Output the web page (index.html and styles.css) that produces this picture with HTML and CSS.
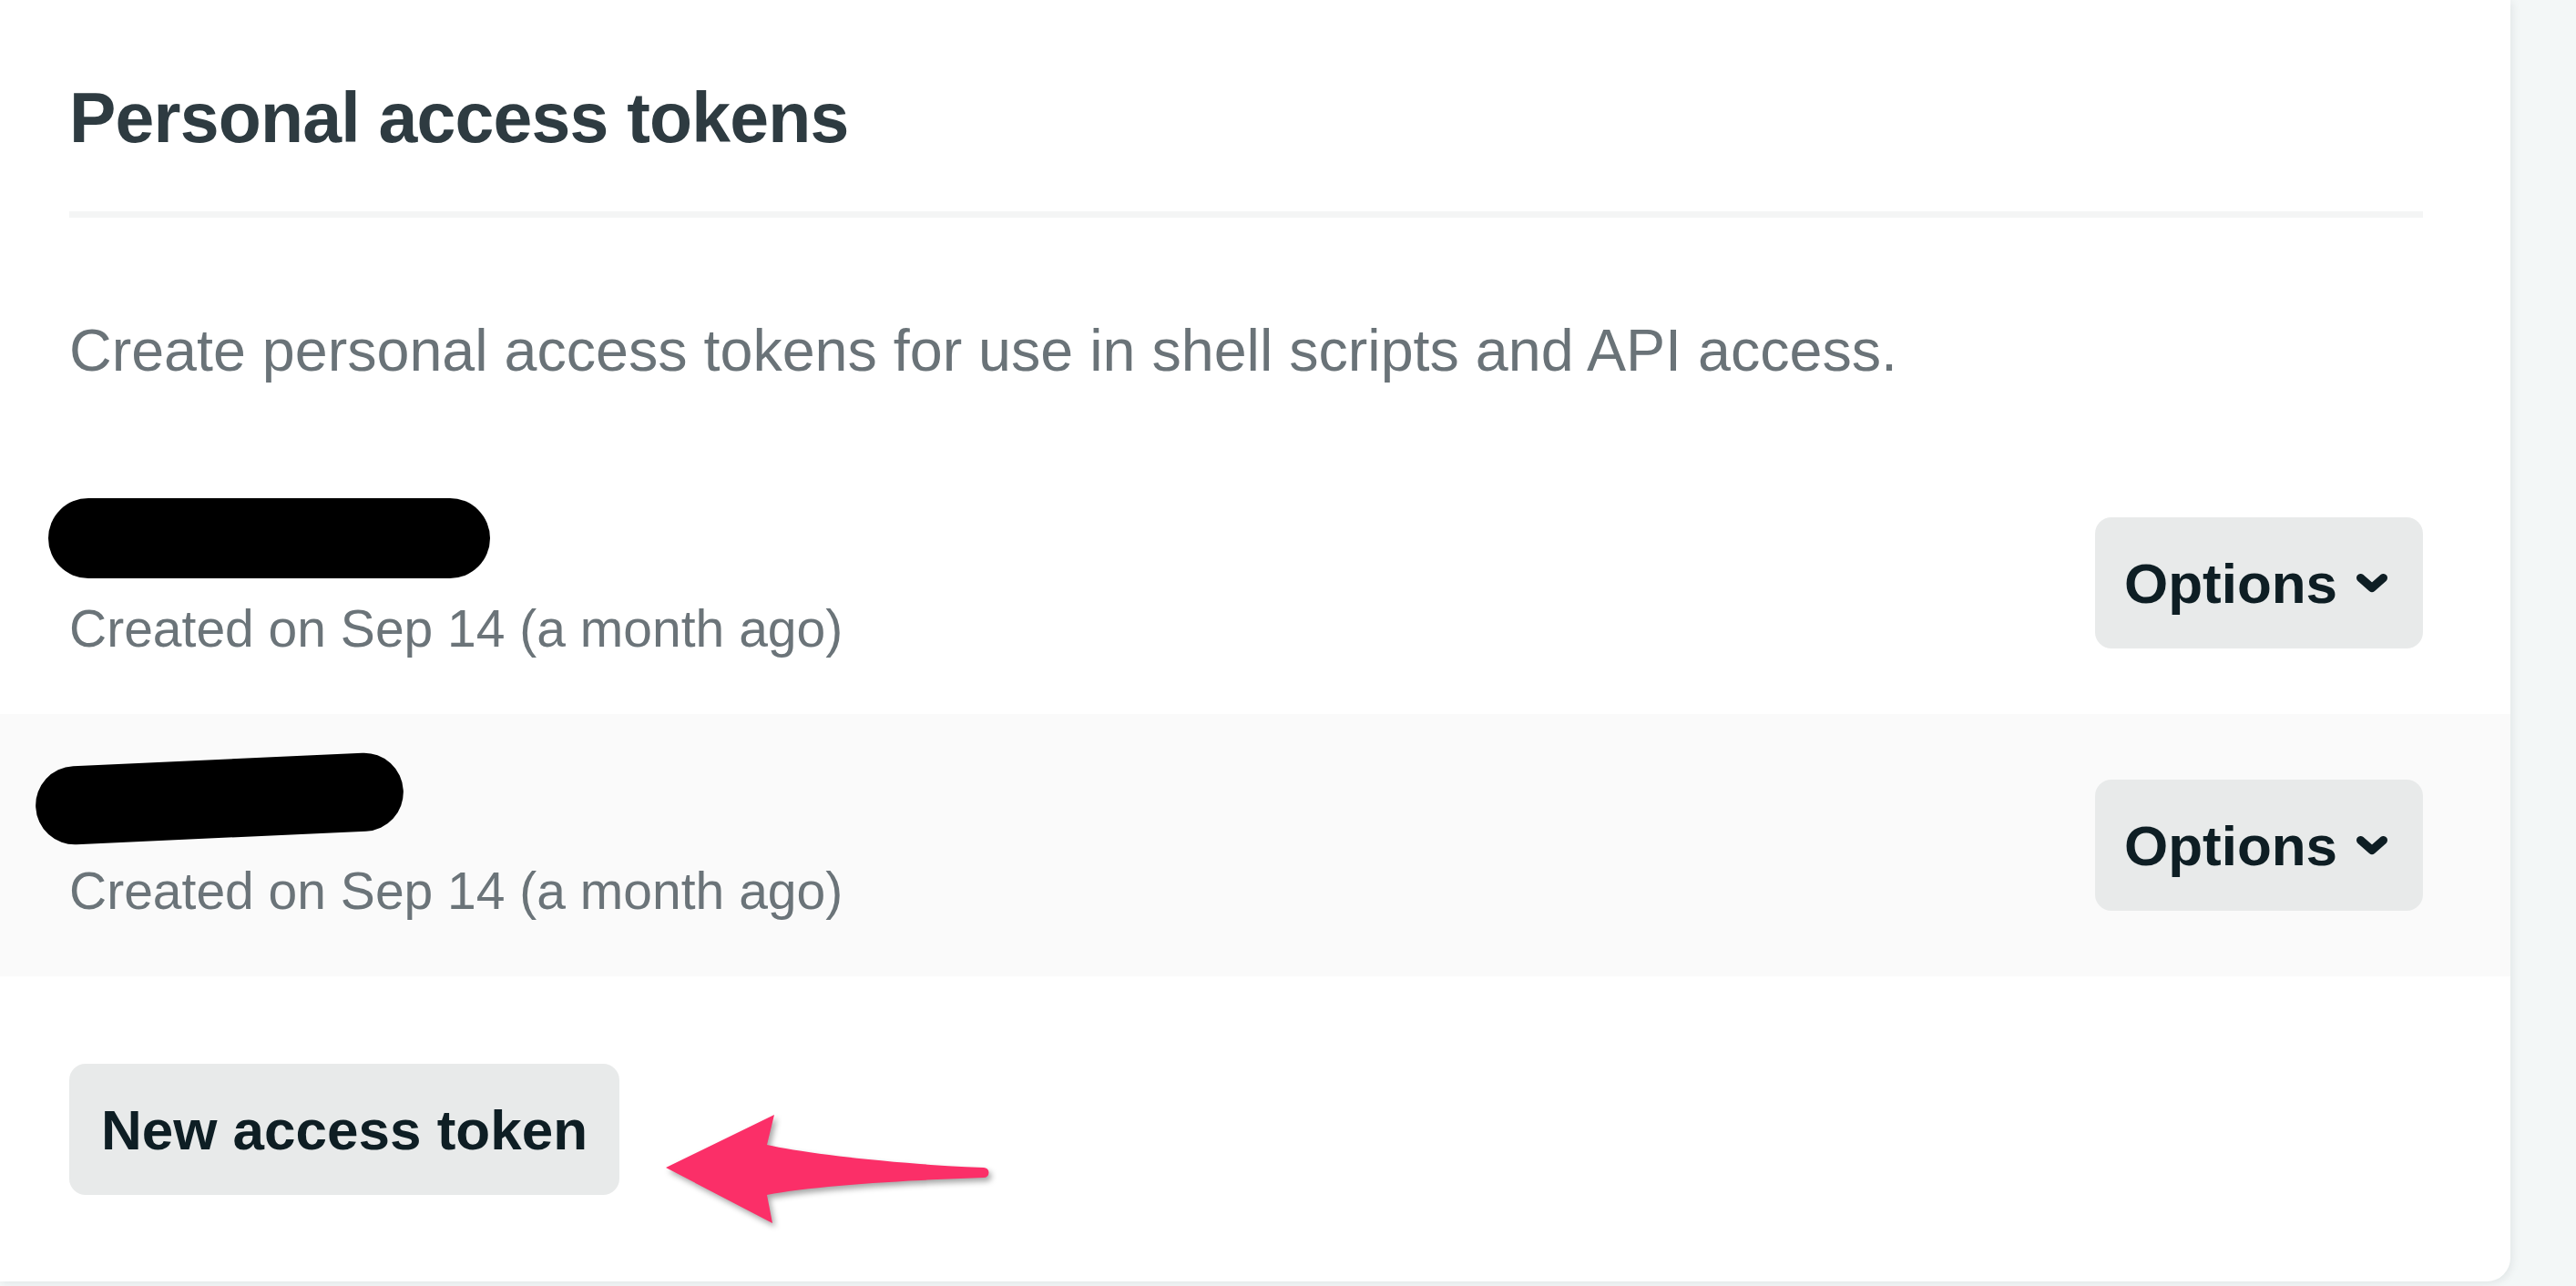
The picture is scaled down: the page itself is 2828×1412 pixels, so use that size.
FILE: index.html
```html
<!DOCTYPE html>
<html lang="en">
<head>
<meta charset="utf-8">
<title>Personal access tokens</title>
<link rel="stylesheet" href="styles.css">
</head>
<body>
<div class="card">
  <header class="card-head">
    <h2 class="title">Personal access tokens</h2>
    <div class="rule"></div>
    <p class="desc">Create personal access tokens for use in shell scripts and API access.</p>
  </header>
  <ul class="tokens">
    <li class="token">
      <div class="token-info">
        <div class="token-name"><span class="redact redact-a"></span></div>
        <div class="token-date">Created on Sep 14 (a month ago)</div>
      </div>
      <button class="btn btn-options">Options
        <svg class="chev" width="36" height="23" viewBox="0 0 36 23"><path d="M5.5 5.5 L18 16.5 L30.5 5.5" fill="none" stroke="#0e1e24" stroke-width="9" stroke-linecap="round" stroke-linejoin="round"/></svg>
      </button>
    </li>
    <li class="token token-alt">
      <div class="token-info">
        <div class="token-name"><span class="redact redact-b"></span></div>
        <div class="token-date">Created on Sep 14 (a month ago)</div>
      </div>
      <button class="btn btn-options">Options
        <svg class="chev" width="36" height="23" viewBox="0 0 36 23"><path d="M5.5 5.5 L18 16.5 L30.5 5.5" fill="none" stroke="#0e1e24" stroke-width="9" stroke-linecap="round" stroke-linejoin="round"/></svg>
      </button>
    </li>
  </ul>
  <footer class="card-foot">
    <button class="btn btn-new">New access token</button>
  </footer>
  <svg class="arrow" width="420" height="170" viewBox="0 0 420 170">
    <path d="M31 82 L150 24 L142 57 C182 66 280 78 380 82 A5.5 5.5 0 0 1 380 93 C290 96 192 102 142 112 L148 143 Z" fill="#fb2f68"/>
  </svg>
</div>
</body>
</html>
```
FILE: styles.css
```css
* { box-sizing: border-box; }
html, body { margin: 0; padding: 0; }
body {
  width: 2828px;
  height: 1412px;
  overflow: hidden;
  background: #f3f7f7;
  font-family: "Liberation Sans", Arial, sans-serif;
}
.card {
  position: relative;
  width: 2756px;
  background: #ffffff;
  border-bottom-right-radius: 26px;
  box-shadow: 2px 2px 10px rgba(14, 30, 37, 0.08);
}
.card-head {
  padding: 83px 96px 0 76px;
}
.title {
  margin: 0;
  font-size: 77px;
  line-height: 92px;
  font-weight: 700;
  letter-spacing: -0.8px;
  color: #2e3b41;
}
.rule {
  margin-top: 57px;
  height: 7px;
  background: #f4f5f5;
}
.desc {
  margin: 98px 0 0;
  font-size: 64.6px;
  line-height: 96px;
  color: #6a7378;
}
.tokens {
  list-style: none;
  margin: 63px 0 0;
  padding: 0;
}
.token {
  display: flex;
  align-items: center;
  justify-content: space-between;
  height: 288px;
  padding: 0 96px 0 76px;
}
.token-alt { background: #fafafa; }
.token-info {
  display: flex;
  flex-direction: column;
}
.token-name {
  height: 88px;
  margin-bottom: 11px;
}
.redact {
  display: block;
  background: #000;
  border-radius: 44px;
}
.redact-a {
  width: 485px;
  height: 88px;
  margin-left: -23px;
  margin-top: -4px;
}
.redact-b {
  width: 404px;
  height: 86px;
  margin-left: -37px;
  margin-top: -5px;
  transform: rotate(-2.6deg);
}
.token-date {
  font-size: 57px;
  line-height: 80px;
  color: #6b7479;
}
.btn {
  display: inline-flex;
  align-items: center;
  justify-content: center;
  white-space: nowrap;
  border: 0;
  margin: 0;
  background: #e8eaea;
  border-radius: 18px;
  height: 144px;
  font-family: "Liberation Sans", Arial, sans-serif;
  font-weight: 700;
  font-size: 62px;
  color: #0e1e24;
}
.btn-options {
  width: 360px;
  padding: 0 38px 0 32px;
  gap: 20px;
}
.chev { display: block; flex: none; }
.card-foot {
  padding: 96px 96px 95px 76px;
}
.btn-new {
  width: 604px;
  padding: 0;
}
.arrow {
  position: absolute;
  left: 700px;
  top: 1200px;
  filter: drop-shadow(3px 4px 3px rgba(0, 0, 0, 0.35));
}
```
